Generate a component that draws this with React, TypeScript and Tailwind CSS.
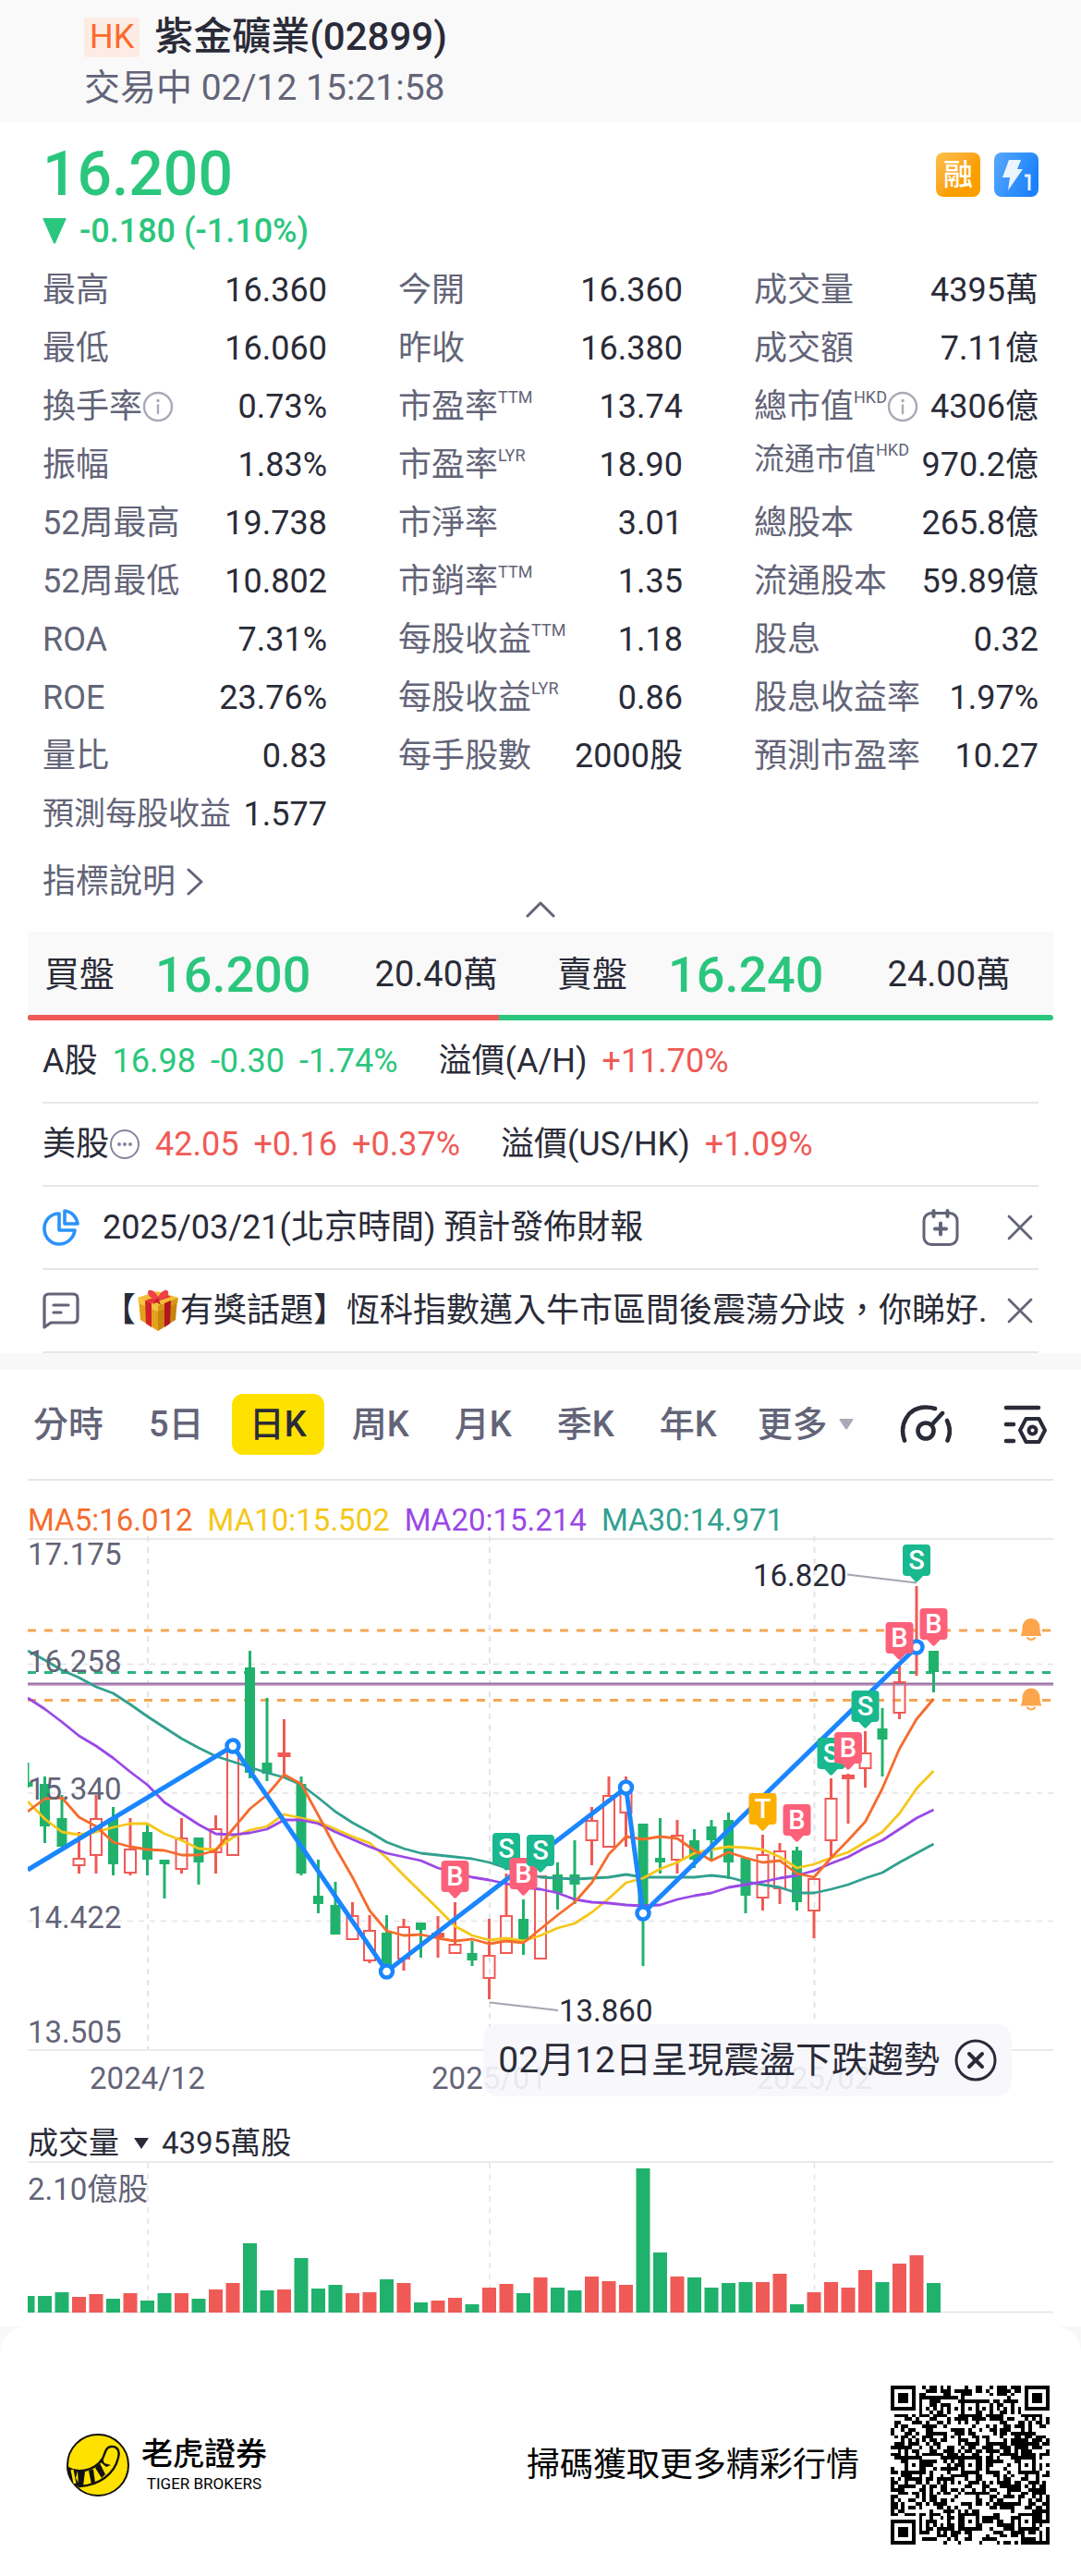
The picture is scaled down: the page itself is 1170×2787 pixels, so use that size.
import { useState } from "react";

type Tone = "up" | "down";
type Stat = { label: string; value: string; sup?: string; info?: boolean; small?: boolean };

const stats: Stat[] = [
  { label: "最高", value: "16.360" },
  { label: "今開", value: "16.360" },
  { label: "成交量", value: "4395萬" },
  { label: "最低", value: "16.060" },
  { label: "昨收", value: "16.380" },
  { label: "成交額", value: "7.11億" },
  { label: "換手率", value: "0.73%", info: true },
  { label: "市盈率", sup: "TTM", value: "13.74" },
  { label: "總市值", sup: "HKD", value: "4306億", info: true },
  { label: "振幅", value: "1.83%" },
  { label: "市盈率", sup: "LYR", value: "18.90" },
  { label: "流通市值", sup: "HKD", value: "970.2億", small: true },
  { label: "52周最高", value: "19.738" },
  { label: "市淨率", value: "3.01" },
  { label: "總股本", value: "265.8億" },
  { label: "52周最低", value: "10.802" },
  { label: "市銷率", sup: "TTM", value: "1.35" },
  { label: "流通股本", value: "59.89億" },
  { label: "ROA", value: "7.31%" },
  { label: "每股收益", sup: "TTM", value: "1.18" },
  { label: "股息", value: "0.32" },
  { label: "ROE", value: "23.76%" },
  { label: "每股收益", sup: "LYR", value: "0.86" },
  { label: "股息收益率", value: "1.97%" },
  { label: "量比", value: "0.83" },
  { label: "每手股數", value: "2000股" },
  { label: "預測市盈率", value: "10.27" },
  { label: "預測每股收益", value: "1.577", small: true },
];

const tabs = ["分時", "5日", "日K", "周K", "月K", "季K", "年K"];

const GREEN = "#20b26c";
const RED = "#f05a56";
const STEP = 18.5;
const Y_SCALE = 1.2245;

const toX = (i: number) => i * STEP;
const toY = (v: number) => Math.round(v * Y_SCALE);

// [tone, high, body top, body bottom, low, volume]
const candles: [Tone, number, number, number, number, number][] = [
  ["down", 218, 235, 239, 240, 18],
  ["down", 230, 237, 274, 289, 18],
  ["down", 247, 267, 292, 292, 22],
  ["up", 279, 302, 309, 316, 17],
  ["up", 247, 267, 300, 316, 20],
  ["down", 257, 267, 308, 318, 15],
  ["up", 267, 294, 315, 318, 21],
  ["down", 273, 279, 304, 318, 13],
  ["down", 304, 304, 308, 338, 21],
  ["up", 267, 284, 312, 316, 21],
  ["down", 284, 284, 306, 326, 15],
  ["up", 265, 276, 297, 316, 25],
  ["up", 203, 203, 300, 300, 32],
  ["down", 119, 134, 227, 232, 75],
  ["down", 161, 218, 228, 234, 24],
  ["up", 180, 209, 213, 230, 25],
  ["down", 230, 237, 316, 318, 59],
  ["down", 304, 336, 343, 351, 26],
  ["down", 323, 344, 370, 370, 30],
  ["up", 341, 353, 374, 374, 21],
  ["up", 353, 366, 393, 395, 22],
  ["down", 353, 368, 400, 400, 36],
  ["up", 356, 363, 391, 402, 32],
  ["down", 359, 359, 366, 390, 11],
  ["up", 354, 368, 372, 390, 13],
  ["up", 341, 378, 386, 386, 16],
  ["down", 376, 386, 393, 398, 9],
  ["up", 356, 388, 408, 427, 27],
  ["up", 316, 353, 386, 386, 31],
  ["down", 339, 356, 376, 388, 21],
  ["up", 318, 318, 391, 391, 38],
  ["down", 306, 317, 333, 348, 27],
  ["down", 287, 317, 326, 343, 24],
  ["up", 257, 269, 287, 309, 39],
  ["up", 230, 247, 292, 292, 34],
  ["up", 230, 240, 262, 292, 30],
  ["down", 272, 272, 350, 398, 156],
  ["down", 267, 302, 306, 316, 65],
  ["up", 269, 282, 304, 316, 39],
  ["down", 277, 287, 304, 311, 38],
  ["down", 269, 274, 287, 304, 27],
  ["down", 262, 269, 306, 321, 32],
  ["down", 302, 302, 336, 351, 33],
  ["up", 282, 299, 337, 349, 33],
  ["up", 289, 296, 329, 343, 42],
  ["down", 292, 296, 341, 349, 9],
  ["up", 320, 320, 349, 373, 22],
  ["up", 232, 249, 287, 302, 33],
  ["up", 228, 229, 233, 272, 27],
  ["up", 190, 209, 223, 240, 46],
  ["down", 170, 188, 198, 230, 33],
  ["up", 132, 146, 174, 180, 53],
  ["up", 62, 114, 118, 141, 62],
  ["down", 119, 119, 138, 156, 32],
];

const ma5 = [261, 250, 249, 266, 274, 288, 292, 295, 296, 300, 300, 296, 277, 259, 247, 229, 237, 265, 293, 319, 349, 367, 371, 370, 373, 376, 374, 378, 376, 377, 365, 353, 341, 324, 299, 283, 286, 283, 285, 296, 305, 297, 302, 306, 305, 316, 319, 302, 287, 270, 241, 206, 180, 162];
const ma10 = [252, 268, 279, 282, 279, 275, 272, 272, 281, 287, 294, 295, 284, 278, 274, 264, 267, 270, 277, 283, 289, 302, 318, 332, 347, 363, 371, 375, 373, 376, 371, 364, 360, 350, 338, 324, 320, 312, 306, 298, 295, 292, 293, 295, 301, 311, 308, 302, 297, 288, 279, 263, 241, 225];
const ma20 = [161, 171, 182, 194, 203, 214, 226, 238, 253, 263, 273, 281, 282, 280, 277, 269, 269, 272, 279, 286, 292, 298, 301, 305, 311, 315, 319, 322, 325, 328, 330, 333, 339, 341, 342, 344, 345, 344, 339, 336, 333, 328, 326, 323, 320, 318, 314, 307, 301, 293, 287, 277, 267, 260];
const ma30 = [119, 127, 136, 143, 151, 157, 167, 177, 187, 197, 205, 212, 217, 222, 227, 231, 238, 249, 261, 271, 279, 288, 294, 298, 300, 301, 303, 306, 311, 315, 319, 320, 321, 320, 319, 317, 319, 319, 319, 319, 318, 319, 323, 326, 328, 333, 333, 330, 326, 320, 315, 306, 298, 290];

const trend: [number, number][] = [[0, 313], [12, 203], [21, 403], [35, 240], [36, 351], [52, 116]];

const markers: [string, number, number][] = [
  ["B", 25, 305],
  ["S", 28, 280],
  ["B", 29, 302],
  ["S", 30, 282],
  ["T", 43, 245],
  ["B", 45, 255],
  ["S", 47, 196],
  ["B", 48, 191],
  ["S", 49, 154],
  ["B", 51, 94],
  ["S", 52, 25],
  ["B", 53, 82],
];
const markerColor: Record<string, string> = { B: "#fc6179", S: "#19b88f", T: "#fbb000" };

const months: [string, number][] = [["2024/12", 7], ["2025/01", 27], ["2025/02", 46]];
const prices: [string, number][] = [["17.175", 53], ["16.258", 169], ["15.340", 307], ["14.422", 446], ["13.505", 570]];

const toPoints = (values: number[]) => values.map((v, i) => `${toX(i)},${toY(v)}`).join(" ");

function InfoIcon() {
  return (
    <svg viewBox="0 0 34 34" className="h-[34px] w-[34px] shrink-0" fill="none" stroke="#a9aab8" strokeWidth="2.4" strokeLinecap="round">
      <circle cx="17" cy="17" r="15" />
      <path d="M17 15.500V24" />
      <circle cx="17" cy="10.500" r="1" fill="#a9aab8" strokeWidth="1.500" />
    </svg>
  );
}

function CloseIcon() {
  return (
    <svg viewBox="0 0 28 28" className="h-7 w-7" fill="none" stroke="#636478" strokeWidth="2.800" strokeLinecap="round">
      <path d="M2 2L26 26M26 2L2 26" />
    </svg>
  );
}

function GiftIcon() {
  return (
    <svg viewBox="0 0 46 46" className="mx-px h-[46px] w-[46px] shrink-0">
      <path d="M2 11L23 19V45L4 33Z" fill="#e3a21a" />
      <path d="M44 11L23 19V45L42 33Z" fill="#c9830f" />
      <path d="M1 9L22 2L45 9L23 19Z" fill="#f2bd35" />
      <path d="M1 9L23 18V24L2 15Z" fill="#f5c544" />
      <path d="M45 9L23 18V24L44 15Z" fill="#d99518" />
      <path d="M9 12L16 15V41L10 37Z" fill="#d3222a" />
      <path d="M37 12L30 15V41L36 37Z" fill="#b3161f" />
      <path d="M9 12L31 5L37 8L16 15Z" fill="#e5333a" />
      <path d="M23 11C14 10 10 5 13 1C18 0 22 5 23 9C25 4 29 0 33 1C37 6 31 10 23 11Z" fill="#ef4146" />
      <path d="M23 9L17 16L22 14L26 17Z" fill="#c21c26" />
    </svg>
  );
}

function TrendChart() {
  return (
    <svg viewBox="0 22 1110 638" className="block h-auto w-full" role="img" aria-label="日K">
      <g stroke="#e4e4e8" strokeWidth="1.500">
        <path d="M0 25H1110M0 578H1110" />
        <path d="M0 160.500H1110M0 300H1110M0 438.500H1110" strokeDasharray="6 6" />
        {months.map(([name, i]) => (
          <path key={name} d={`M${toX(i) + 0.5} 22V578`} strokeDasharray="6 6" strokeWidth="2" />
        ))}
      </g>
      <g fill="#636478" fontSize="33">
        {months.map(([name, i]) => (
          <text key={name} x={toX(i)} y="620" textAnchor="middle">{name}</text>
        ))}
      </g>
      <g fill="none" strokeWidth="3">
        <path d="M0 124H1110M0 199.500H1110" stroke="#f5a653" strokeDasharray="9 9" />
        <path d="M0 169.500H1110" stroke="#2bb57c" strokeDasharray="9 9" />
        <path d="M0 183H1110" stroke="#d5a8d8" strokeWidth="2" />
        <path d="M0 181.500H1110" stroke="#94709f" strokeWidth="2" />
      </g>
      <svg x="0" y="0" width="1110" height="660" viewBox="0 0 1110 660">
        {candles.map(([tone, high, top, bottom, low], i) => {
          const color = tone === "up" ? RED : GREEN;
          const x = toX(i);
          const height = toY(bottom) - toY(top);
          const hollow = tone === "up" && height > 6;
          return (
            <g key={i} stroke={color} strokeWidth="3">
              {high < top && <path d={`M${x} ${toY(high)}V${toY(top)}`} />}
              {low > bottom && <path d={`M${x} ${toY(bottom)}V${toY(low)}`} />}
              {hollow ? (
                <rect x={x - 6} y={toY(top) + 1} width="12" height={height - 1} fill="none" strokeWidth="2" />
              ) : (
                <rect x={x - (tone === "up" ? 7 : 5.5)} y={toY(top)} width={tone === "up" ? 14 : 11} height={height} fill={color} stroke="none" />
              )}
            </g>
          );
        })}
        <g fill="none" strokeWidth="2.800" strokeLinejoin="round">
          <polyline points={toPoints(ma30)} stroke="#32a08f" />
          <polyline points={toPoints(ma10)} stroke="#f5c719" />
          <polyline points={toPoints(ma20)} stroke="#9a48e6" />
          <polyline points={toPoints(ma5)} stroke="#f56c2d" />
        </g>
        <polyline points={trend.map(([i, v]) => `${toX(i)},${toY(v)}`).join(" ")} fill="none" stroke="#1a86ff" strokeWidth="5" />
        {trend.slice(1).map(([i, v]) => (
          <circle key={i} cx={toX(i)} cy={toY(v)} r="6.500" fill="#fff" stroke="#1a86ff" strokeWidth="4.500" />
        ))}
      </svg>
      <g fill="#636478" fontSize="33">
        {prices.map(([price, y]) => (
          <text key={price} x="0" y={y}>{price}</text>
        ))}
      </g>
      <g stroke="#a4a5b1" strokeWidth="2">
        <path d="M500 526.500L574 535" />
        <path d="M887 63.500L962 72.500" />
      </g>
      <g fill="#2a2b38" fontSize="33">
        <text x="575" y="547">13.860</text>
        <text x="785" y="76">16.820</text>
      </g>
      {[124, 199.5].map((y) => (
        <g key={y} transform={`translate(1086 ${y})`}>
          <rect x="-12" y="-3" width="24" height="6" fill="#fff" />
          <path d="M-11 5C-10 3 -9.500 1 -9.500 -3C-9.500 -9 -5 -13 0 -13C5 -13 9.500 -9 9.500 -3C9.500 1 10 3 11 5V6H-11Z" fill="#fda54b" />
          <path d="M-4 8Q0 12 4 8" fill="none" stroke="#fda54b" strokeWidth="2" strokeLinecap="round" />
        </g>
      ))}
      {markers.map(([side, i, v]) => (
        <g key={`${side}${i}`} transform={`translate(${toX(i)} ${toY(v)})`}>
          <path d="M-11 0H11Q15 0 15 4V30Q15 34 11 34H7L1.500 40Q0 41.500 -1.500 40L-7 34H-11Q-15 34 -15 30V4Q-15 0 -11 0Z" fill={markerColor[side]} />
          <text y="27" textAnchor="middle" fill="#fff" fontSize="29" fontWeight="500">{side}</text>
        </g>
      ))}
    </svg>
  );
}

function VolumeChart() {
  return (
    <svg viewBox="0 0 1110 165" className="block h-auto w-full" role="img" aria-label="成交量">
      <g stroke="#e4e4e8" strokeWidth="1.500">
        <path d="M0 1H1110M0 163.500H1110" />
        {months.map(([name, i]) => (
          <path key={name} d={`M${toX(i) + 0.5} 2V163`} strokeDasharray="6 6" />
        ))}
      </g>
      <text x="0" y="42" fill="#636478" fontSize="33">2.10億股</text>
      {candles.map(([tone, , , , , volume], i) => (
        <rect
          key={i}
          x={Math.max(0, toX(i) - 7.5)}
          y={164 - volume}
          width={i === 0 ? 7.5 : 15}
          height={volume}
          fill={tone === "up" ? RED : GREEN}
        />
      ))}
    </svg>
  );
}

const QR_SIZE = 45;

function qrPath() {
  const grid = Array.from({ length: QR_SIZE }, () => Array(QR_SIZE).fill(false));
  let seed = 2899;
  for (let y = 0; y < QR_SIZE; y++) {
    for (let x = 0; x < QR_SIZE; x++) {
      seed = (seed * 1103515245 + 12345) % 2147483648;
      grid[y][x] = seed / 2147483648 > 0.5;
    }
  }
  for (let i = 8; i < QR_SIZE - 8; i++) {
    grid[6][i] = i % 2 === 0;
    grid[i][6] = i % 2 === 0;
  }
  const square = (cx: number, cy: number, reach: number, dark: (d: number) => boolean) => {
    for (let dy = -reach; dy <= reach; dy++) {
      for (let dx = -reach; dx <= reach; dx++) {
        if (grid[cy + dy]?.[cx + dx] === undefined) continue;
        grid[cy + dy][cx + dx] = dark(Math.max(Math.abs(dx), Math.abs(dy)));
      }
    }
  };
  [[3, 3], [41, 3], [3, 41]].forEach(([x, y]) => square(x, y, 4, (d) => d < 2 || d === 3));
  [[22, 6], [6, 22], [22, 22], [38, 22], [22, 38], [38, 38]].forEach(([x, y]) => square(x, y, 2, (d) => d !== 1));

  return grid
    .flatMap((row, y) => row.map((on, x) => (on ? `M${x} ${y}h1v1h-1z` : "")))
    .join("");
}

const qr = qrPath();

function Logo() {
  return (
    <svg viewBox="0 0 68 68" className="h-[68px] w-[68px]" fill="none" stroke="#111" strokeWidth="2">
      <circle cx="34" cy="34" r="33" fill="#ffe100" />
      <path d="M1.500 37C12 43 30 41 39 27C42 21 42 15 48 14C55 13 58 19 56 26C52 43 36 56 14 57C6 53 2 45 1.500 37Z" fill="#ffe100" strokeWidth="2.400" />
      <path d="M1.500 37C5 39 9 40 12 40L10 48L15 57C7 55 2 45 1.500 37Z" fill="#111" stroke="none" />
      <path d="M12 40L20 41L18 57L13 57Z" fill="#111" stroke="none" />
      <path d="M24 40L29 38.500L31 53L27 55Z" fill="#111" stroke="none" />
      <path d="M31 37L36 32L42 44L38 48Z" fill="#111" stroke="none" />
      <path d="M39 27L41 32L48 34L43 36L37 31Z" fill="#111" stroke="none" />
      <path d="M6 39L9 54" stroke="#ffe100" strokeWidth="3" />
    </svg>
  );
}

function StatCell({ label, value, sup, info, small }: Stat) {
  return (
    <div className="flex h-[63px] items-center justify-between whitespace-nowrap">
      <dt className={`flex items-center text-[#636478] ${small ? (sup ? "pb-3 text-[33px]" : "text-[34px]") : "text-4xl"}`}>
        <span>{label}</span>
        {sup && <sup className="top-0 mb-5 text-lg leading-none">{sup}</sup>}
        {info && <InfoIcon />}
      </dt>
      <dd className="text-4xl text-[#2a2b38]">{value}</dd>
    </div>
  );
}

function Quote({ side, price, amount }: { side: string; price: string; amount: string }) {
  return (
    <div className="flex flex-1 items-center pt-[2px] pr-[46px] pl-[18px] whitespace-nowrap">
      <span className="w-[120px] text-[38px]">{side}</span>
      <span className="text-[54px] font-medium text-[#2bc67d]">{price}</span>
      <span className="ml-auto text-[38px]">{amount}</span>
    </div>
  );
}

export default function App() {
  const [active, setActive] = useState("日K");
  const [showTip, setShowTip] = useState(true);

  return (
    <main className="w-full bg-white text-[#2a2b38] [font-family:Roboto,'Noto_Sans_CJK_TC',sans-serif]">
      <header className="flex h-[132px] flex-col bg-[#f9f9f9] pl-[91px] pt-[13px]">
        <h1 className="flex items-center gap-4 text-[42px] leading-[54px] font-medium">
          <span className="flex h-[43px] items-center rounded bg-[#fcece4] px-[6px] text-4xl font-normal text-[#fb6a2b]">HK</span>
          紫金礦業(02899)
        </h1>
        <p className="text-[39px] leading-[56px] text-[#636478]">交易中 02/12 15:21:58</p>
      </header>

      <section className="px-[46px] pt-[21px]">
        <div className="flex items-center justify-between">
          <p className="text-[66px] leading-[72px] font-medium text-[#2bc67d]">16.200</p>
          <div className="flex gap-[15px]">
            <span className="flex h-12 w-12 items-center justify-center rounded-lg bg-linear-to-br from-[#fbc04a] to-[#fb9f00] to-60% text-[32px] leading-none font-medium text-white">融</span>
            <svg viewBox="0 0 48 48" className="h-12 w-12">
              <defs>
                <linearGradient id="bolt" x1="0" y1="0" x2="1" y2="0.4">
                  <stop offset="0" stopColor="#58a8fd" />
                  <stop offset="1" stopColor="#1c82fb" />
                </linearGradient>
              </defs>
              <rect width="48" height="48" rx="8" fill="url(#bolt)" />
              <path d="M16 8H29L25 18H31L15 41L17 27H9Z" fill="#eaf5ff" />
              <path d="M33 25H38V41" fill="none" stroke="#eaf5ff" strokeWidth="3" />
            </svg>
          </div>
        </div>
        <p className="flex items-center gap-[14px] text-4xl leading-[50px] font-medium text-[#2bc67d]">
          <svg viewBox="0 0 26 28" className="h-7 w-[26px]" fill="#2bc67d">
            <path d="M1 0H25Q26 0 25.500 1L14 27Q13 28 12 27L0.500 1Q0 0 1 0Z" />
          </svg>
          -0.180 (-1.10%)
        </p>
        <dl className="mt-[7px] grid grid-cols-3 gap-x-[77px]">
          {stats.map((stat) => (
            <StatCell key={stat.label + (stat.sup ?? "")} {...stat} />
          ))}
        </dl>
        <a href="#metrics" className="mt-6 flex h-9 w-fit items-center gap-3 text-4xl text-[#636478]">
          指標說明
          <svg viewBox="0 0 18 30" className="h-[30px] w-[18px]" fill="none" stroke="#636478" strokeWidth="3" strokeLinecap="round" strokeLinejoin="round">
            <path d="M2 2L16 15L2 28" />
          </svg>
        </a>
        <button type="button" aria-label="收起" className="mx-auto mt-[3px] mb-[15px] block">
          <svg viewBox="0 0 32 18" className="h-[18px] w-8" fill="none" stroke="#636478" strokeWidth="3" strokeLinecap="round" strokeLinejoin="round">
            <path d="M2 16L16 2L30 16" />
          </svg>
        </button>
      </section>

      <section className="mx-[30px]">
        <div className="flex h-[90px] bg-[#f9f9f9]">
          <Quote side="買盤" price="16.200" amount="20.40萬" />
          <Quote side="賣盤" price="16.240" amount="24.00萬" />
        </div>
        <div className="flex h-[6px] overflow-hidden rounded-full bg-[#2bc67d]">
          <div className="bg-[#f05a56]" style={{ width: `${(20.4 / 44.4) * 100}%` }} />
        </div>
      </section>

      <section className="px-[46px] text-4xl whitespace-nowrap">
        <div className="flex h-[90px] items-center gap-4 border-b-2 border-[#e6e6ea]">
          <span>A股</span>
          <span className="text-[#2bc67d]">16.98</span>
          <span className="text-[#2bc67d]">-0.30</span>
          <span className="text-[#2bc67d]">-1.74%</span>
          <span className="ml-7">溢價(A/H)</span>
          <span className="text-[#f05a56]">+11.70%</span>
        </div>
        <div className="flex h-[90px] items-center gap-4 border-b-2 border-[#e6e6ea]">
          <span className="flex items-center">
            美股
            <svg viewBox="0 0 34 34" className="h-[34px] w-[34px]" fill="#8485a0">
              <circle cx="17" cy="17" r="15" fill="none" stroke="#8485a0" strokeWidth="2" />
              <circle cx="11" cy="17" r="2" />
              <circle cx="17" cy="17" r="2" />
              <circle cx="23" cy="17" r="2" />
            </svg>
          </span>
          <span className="text-[#f05a56]">42.05</span>
          <span className="text-[#f05a56]">+0.16</span>
          <span className="text-[#f05a56]">+0.37%</span>
          <span className="ml-7">溢價(US/HK)</span>
          <span className="text-[#f05a56]">+1.09%</span>
        </div>
        <div className="flex h-[90px] items-center border-b-2 border-[#e6e6ea]">
          <svg viewBox="0 0 40 40" className="mr-[25px] h-10 w-10" fill="none" stroke="#2c93fa" strokeWidth="3.600" strokeLinejoin="round">
            <path d="M18 5C8 5 2 13 2 21C2 31 9 38 18 38C27 38 34 31 35 23H18Z" />
            <path d="M24 2C32 3 37 9 38 16H24Z" />
          </svg>
          <span>2025/03/21(北京時間) 預計發佈財報</span>
          <button type="button" aria-label="加入日曆" className="ml-auto">
            <svg viewBox="0 0 40 40" className="h-10 w-10" fill="none" stroke="#636478" strokeWidth="3" strokeLinecap="round">
              <rect x="2" y="4.500" width="36" height="34" rx="8" />
              <path d="M12.500 2V8M27.500 2V8" strokeWidth="4" />
              <path d="M20 15.500V27.500M14 21.500H26" strokeWidth="4" />
            </svg>
          </button>
          <button type="button" aria-label="關閉財報提示" className="ml-[52px] mr-[6px]">
            <CloseIcon />
          </button>
        </div>
        <div className="flex h-[90px] items-center border-b-2 border-[#e6e6ea]">
          <svg viewBox="0 0 40 40" className="mr-[25px] h-10 w-10" fill="none" stroke="#636478" strokeWidth="3.200" strokeLinecap="round" strokeLinejoin="round">
            <path d="M2 38V7Q2 2 7 2H33Q38 2 38 7V28Q38 33 33 33H9Z" />
            <path d="M12 14H28M12 22H20" />
          </svg>
          <a href="#topic" className="flex min-w-0 items-center">
            【<GiftIcon />有獎話題】恆科指數邁入牛市區間後震蕩分歧，你睇好.
          </a>
          <button type="button" aria-label="關閉話題" className="ml-auto mr-[6px]">
            <CloseIcon />
          </button>
        </div>
      </section>

      <div className="h-[18px] bg-[#f8f8f8]" />

      <section className="mx-[30px]">
        <nav className="flex h-[120px] items-center justify-between border-b-2 border-[#e6e6ea] pr-[6px] whitespace-nowrap">
          <div className="-ml-[13px] flex gap-[11px] text-[38px] font-medium text-[#636478]">
            {tabs.map((tab) => (
              <button
                key={tab}
                type="button"
                onClick={() => setActive(tab)}
                className={`h-[66px] rounded-xl px-[19px] ${active === tab ? "bg-[#ffe100] text-[#2a2b38]" : ""}`}
              >
                {tab}
              </button>
            ))}
            <button type="button" className="flex h-[66px] items-center gap-3 pl-[14px]">
              更多
              <svg viewBox="0 0 16 12" className="h-3 w-4" fill="#a9aab8">
                <path d="M1 0H15Q16 0 15.500 1L9 11Q8 12 7 11L0.500 1Q0 0 1 0Z" />
              </svg>
            </button>
          </div>
          <div className="flex items-center gap-14">
            <button type="button" aria-label="儀表">
              <svg viewBox="0 0 56 42" className="h-[42px] w-14" fill="none" stroke="#2a2b38" strokeWidth="4.600" strokeLinecap="round">
                <path d="M5 38.500C-1 22 8 2.500 28 2.500C32 2.500 35 3 38 4" />
                <path d="M51 17C54.500 24 54.500 32 51.500 38.500" />
                <circle cx="28" cy="28" r="8.500" />
                <path d="M34.500 21.500L46 9" />
              </svg>
            </button>
            <button type="button" aria-label="圖表設定">
              <svg viewBox="0 0 48 44" className="h-11 w-12" fill="none" stroke="#2a2b38" strokeWidth="4.600" strokeLinecap="round" strokeLinejoin="round">
                <path d="M3 4H38M3 22H11M3 40H11" />
                <path d="M24.500 16H38.500L45 28.500L38.500 41H24.500L18 28.500Z" strokeWidth="4" />
                <circle cx="31.500" cy="28.500" r="4" strokeWidth="4" />
              </svg>
            </button>
          </div>
        </nav>

        <div className="flex gap-4 pt-[26px] text-[33px] leading-[34px]">
          <span className="text-[#f56c2d]">MA5:16.012</span>
          <span className="text-[#f5c719]">MA10:15.502</span>
          <span className="text-[#9a48e6]">MA20:15.214</span>
          <span className="text-[#32a08f]">MA30:14.971</span>
        </div>
        <div className="relative">
          <TrendChart />
          {showTip && (
            <div className="absolute right-[45px] bottom-8 flex h-[78px] items-center gap-4 rounded-2xl bg-[#f7f7fc]/90 px-4 text-[39px] whitespace-nowrap">
              02月12日呈現震盪下跌趨勢
              <button type="button" aria-label="關閉提示" onClick={() => setShowTip(false)}>
                <svg viewBox="0 0 46 46" className="h-[46px] w-[46px]" fill="none" stroke="#2a2b38" strokeWidth="3" strokeLinecap="round">
                  <circle cx="23" cy="23" r="21" />
                  <path d="M16 16L30 30M30 16L16 30" strokeWidth="4" />
                </svg>
              </button>
            </div>
          )}
        </div>

        <div className="flex h-[38px] items-center text-[33px] leading-[38px]">
          <button type="button" className="flex items-center gap-4">
            成交量
            <svg viewBox="0 0 16 12" className="h-3 w-4" fill="#2a2b38">
              <path d="M0 0H16L8 12Z" />
            </svg>
          </button>
          <span className="ml-[14px]">4395萬股</span>
        </div>
        <VolumeChart />
      </section>

      <footer className="mt-[14px] bg-[#f8f8f8]">
        <div className="flex items-center rounded-t-[28px] bg-white px-[34px] pt-[64px] pb-[34px] pl-[72px]">
          <Logo />
          <div className="ml-[13px] flex flex-col items-center text-black">
            <span className="text-[34px] leading-10 font-medium">老虎證券</span>
            <span className="text-[17px] leading-6">TIGER BROKERS</span>
          </div>
          <p className="ml-auto text-4xl text-black">掃碼獲取更多精彩行情</p>
          <svg viewBox="0 0 45 45" className="ml-[34px] h-[172px] w-[172px]" shapeRendering="crispEdges" role="img" aria-label="QR">
            <path d={qr} fill="#000" />
          </svg>
        </div>
      </footer>
    </main>
  );
}
